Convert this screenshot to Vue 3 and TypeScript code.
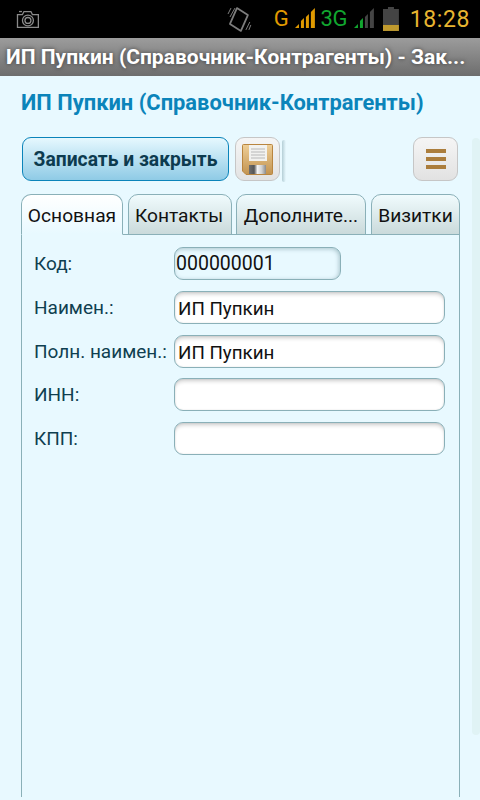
<template>
  <div class="screen">
    <div class="status">
      <svg class="cam" width="24" height="20" viewBox="0 0 24 20" fill="none" stroke="#8a8a8a" stroke-width="1.3">
        <path d="M1.500 5.500h5l1.500-3h7l1.500 3h6v13h-21z" />
        <path d="M3 2.500h3" />
        <circle cx="12" cy="11.500" r="5.500" />
        <circle cx="12" cy="11.500" r="3" />
      </svg>
      <svg class="vibrate" width="26" height="30" viewBox="0 0 26 30" fill="none" stroke="#7d7d7d" stroke-width="1.800" stroke-linejoin="round">
        <path d="M11 4l11 7-7 16-11-7z" />
        <path d="M4 13l5-9M2 10l3-6M20 26l4-8M23 26l2-5" stroke-width="1" />
      </svg>
      <span class="net g">G</span>
      <svg class="bars" width="21" height="20" viewBox="0 0 21 20" fill="#e09a00">
        <path d="M0 20l4-4v4zM6 20v-7l3-3v10zM11 20V9l3-3v14zM16 20V4l4-4v20z" />
      </svg>
      <span class="net three">3G</span>
      <svg class="bars" width="21" height="20" viewBox="0 0 21 20">
        <path fill="#11a52f" d="M0 20l4-4v4zM6 20v-7l3-3v10z" />
        <path fill="#444" d="M11 20V9l3-3v14zM16 20V4l4-4v20z" />
      </svg>
      <svg class="battery" width="16" height="24" viewBox="0 0 16 24">
        <path fill="#444" d="M5 0h6v2h5v22H0V2h5z" />
        <path fill="#c09a2e" d="M0 18h16v6H0z" />
      </svg>
      <span class="clock">18:28</span>
    </div>

    <div class="appbar">
      <span class="appbar-title">ИП Пупкин (Справочник-Контрагенты) - Зак...</span>
    </div>

    <div class="page">
      <div class="content">
        <h1 class="heading">ИП Пупкин (Справочник-Контрагенты)</h1>

        <div class="toolbar">
          <button class="btn-primary">Записать и закрыть</button>
          <button class="btn-icon save">
            <svg width="31" height="31" viewBox="0 0 31 31">
              <defs>
                <linearGradient id="disk" x1="0" y1="0" x2="0" y2="1">
                  <stop offset="0" stop-color="#efcf98" />
                  <stop offset="1" stop-color="#c29350" />
                </linearGradient>
                <linearGradient id="shutter" x1="0" y1="0" x2="1" y2="0">
                  <stop offset="0" stop-color="#6f6f6f" />
                  <stop offset="0.3" stop-color="#555" />
                  <stop offset="0.5" stop-color="#f4f4f4" />
                  <stop offset="0.75" stop-color="#d0d0d0" />
                  <stop offset="1" stop-color="#8a8a8a" />
                </linearGradient>
              </defs>
              <path d="M0.500 1.500a1 1 0 0 1 1-1h28a1 1 0 0 1 1 1v28a1 1 0 0 1-1 1H4l-3.500-3.500z" fill="url(#disk)" stroke="#b9853f" />
              <path d="M7 1h18v16H7z" fill="#f2f2f0" />
              <path d="M9 5h14M9 8h14M9 11h14M9 14h14" stroke="#b8b8b8" stroke-width="1" />
              <path d="M7 21h17v9H7z" fill="url(#shutter)" />
            </svg>
          </button>
          <span class="divider"></span>
          <span class="spacer"></span>
          <button class="btn-icon menu" aria-label="Меню">
            <span></span><span></span><span></span>
          </button>
        </div>

        <div class="tabs">
          <div
            v-for="tab in tabs"
            :key="tab.label"
            class="tab"
            :class="[tab.cls, { active: tab.active }]"
          >{{ tab.label }}</div>
        </div>

        <div class="panel">
          <div v-for="field in fields" :key="field.label" class="row">
            <label class="label">{{ field.label }}</label>
            <div class="input" :class="{ readonly: field.readonly }">{{ field.value }}</div>
          </div>
        </div>
      </div>
      <div class="scroll-track"></div>
    </div>
  </div>
</template>

<script setup lang="ts">
interface Tab {
  label: string
  cls: string
  active?: boolean
}

interface Field {
  label: string
  value: string
  readonly?: boolean
}

const tabs: Tab[] = [
  { label: 'Основная', cls: 't1', active: true },
  { label: 'Контакты', cls: 't2' },
  { label: 'Дополните...', cls: 't3' },
  { label: 'Визитки', cls: 't4' }
]

const fields: Field[] = [
  { label: 'Код:', value: '000000001', readonly: true },
  { label: 'Наимен.:', value: 'ИП Пупкин' },
  { label: 'Полн. наимен.:', value: 'ИП Пупкин' },
  { label: 'ИНН:', value: '' },
  { label: 'КПП:', value: '' }
]
</script>

<style>
html, body { margin: 0; background: #e8f9ff; }
</style>

<style scoped>
.screen {
  width: 480px;
  height: 800px;
  overflow: hidden;
  display: flex;
  flex-direction: column;
  font-family: Roboto, "Liberation Sans", sans-serif;
  background: #e8f9ff;
}

/* status bar */
.status {
  height: 38px;
  flex: none;
  background: #000;
  display: flex;
  align-items: center;
  padding: 0 10px 0 16px;
  box-sizing: border-box;
}
.cam { margin-right: 186px; }
.vibrate { margin-right: 22px; }
.net { font-size: 22px; line-height: 38px; }
.g { color: #e09a00; margin-right: 6px; }
.three { color: #11a52f; margin: 0 7px 0 5px; letter-spacing: -0.5px; }
.bars { margin-bottom: 2px; }
.battery { margin: 0 11px 1px 8px; }
.clock { color: #e8b530; font-size: 23px; letter-spacing: 0.6px; }

/* app bar */
.appbar {
  height: 38px;
  flex: none;
  box-sizing: border-box;
  padding: 0 6px;
  display: flex;
  align-items: center;
  background: linear-gradient(#9c9c9c, #6d6d6d);
}
.appbar-title {
  white-space: nowrap;
  color: #fff;
  font-size: 21px;
  font-weight: 700;
  text-shadow: 0 0 4px rgba(0, 0, 0, 0.55);
}

/* page */
.page {
  flex: 1;
  min-height: 0;
  display: flex;
  padding-left: 21px;
}
.content {
  width: 440px;
  flex: none;
  display: flex;
  flex-direction: column;
}
.heading {
  margin: 15px 0 0;
  height: 24px;
  line-height: 24px;
  font-size: 21.900px;
  font-weight: 700;
  color: #0b84ba;
  white-space: nowrap;
}

.toolbar {
  margin-top: 22px;
  height: 45px;
  flex: none;
  display: flex;
  align-items: flex-start;
  padding: 0 1px;
}
button {
  font-family: inherit;
  margin: 0;
  padding: 0;
  box-sizing: border-box;
}
.btn-primary {
  width: 207px;
  height: 44px;
  border: 1px solid #0b84ba;
  border-radius: 9px;
  background: linear-gradient(#e6f8fe, #8fcbe6);
  color: #0d3b4f;
  font-size: 19.300px;
  font-weight: 700;
}
.btn-icon {
  width: 45px;
  height: 44px;
  border: 1px solid #c6c6c6;
  border-radius: 9px;
  background: linear-gradient(#f5f5f5, #e2e2e2);
  display: flex;
  align-items: center;
  justify-content: center;
}
.save { margin-left: 6px; }
.divider {
  width: 4px;
  height: 42px;
  margin: 3px 0 0 2px;
  background: linear-gradient(90deg, #b4ced6, #e8f9ff);
  border-radius: 2px;
}
.spacer { flex: 1; }
.menu {
  flex-direction: column;
  gap: 4px;
  margin-right: 2px;
}
.menu span {
  display: block;
  width: 20px;
  height: 4px;
  background: #ab7d3c;
}

.tabs {
  margin-top: 12px;
  height: 41px;
  flex: none;
  display: flex;
}
.tab {
  box-sizing: border-box;
  height: 41px;
  border: 1px solid #8ab0b8;
  border-radius: 10px 10px 0 0;
  background: linear-gradient(#f0fbfd, #cadadb);
  font-size: 19.200px;
  line-height: 41px;
  text-align: center;
  color: #111;
  white-space: nowrap;
}
.tab.active {
  background: linear-gradient(#ffffff, #e8f9ff);
  border-bottom-color: #e8f9ff;
  position: relative;
  z-index: 1;
}
.t1 { width: 102px; }
.t2 { width: 104px; margin-left: 5px; padding-right: 2px; }
.t3 { width: 130px; margin-left: 4px; }
.t4 { width: 89px; margin-left: 5px; }

.panel {
  flex: none;
  box-sizing: border-box;
  width: 439px;
  height: 563px;
  margin-top: -1px;
  border: 1px solid #8ab0b8;
  border-bottom: none;
  padding: 12px 14px 0 12px;
  display: flex;
  flex-direction: column;
  gap: 10.750px;
}
.row {
  display: flex;
  align-items: center;
  height: 33px;
}
.label {
  width: 140px;
  flex: none;
  font-size: 19px;
  color: #0f3f50;
  white-space: nowrap;
}
.input {
  box-sizing: border-box;
  width: 271px;
  height: 33px;
  border: 1px solid #8ab0b8;
  border-radius: 9px;
  background: #fff;
  box-shadow: inset 0 4px 4px -2px rgba(0, 0, 0, 0.2), inset 0 0 2px rgba(0, 0, 0, 0.12);
  padding-left: 3px;
  font-size: 18.800px;
  line-height: 34px;
  color: #111;
}
.input.readonly {
  width: 167px;
  background: #e8f9ff;
  padding-left: 1px;
  font-size: 19.500px;
  line-height: 31px;
  box-shadow: inset -1px 1px 4px rgba(90, 130, 140, 0.45);
}

.scroll-track {
  width: 8px;
  height: 597px;
  flex: none;
  margin: 62px 0 0 11px;
  border-radius: 4px;
  background: #e0f3f5;
}
</style>
